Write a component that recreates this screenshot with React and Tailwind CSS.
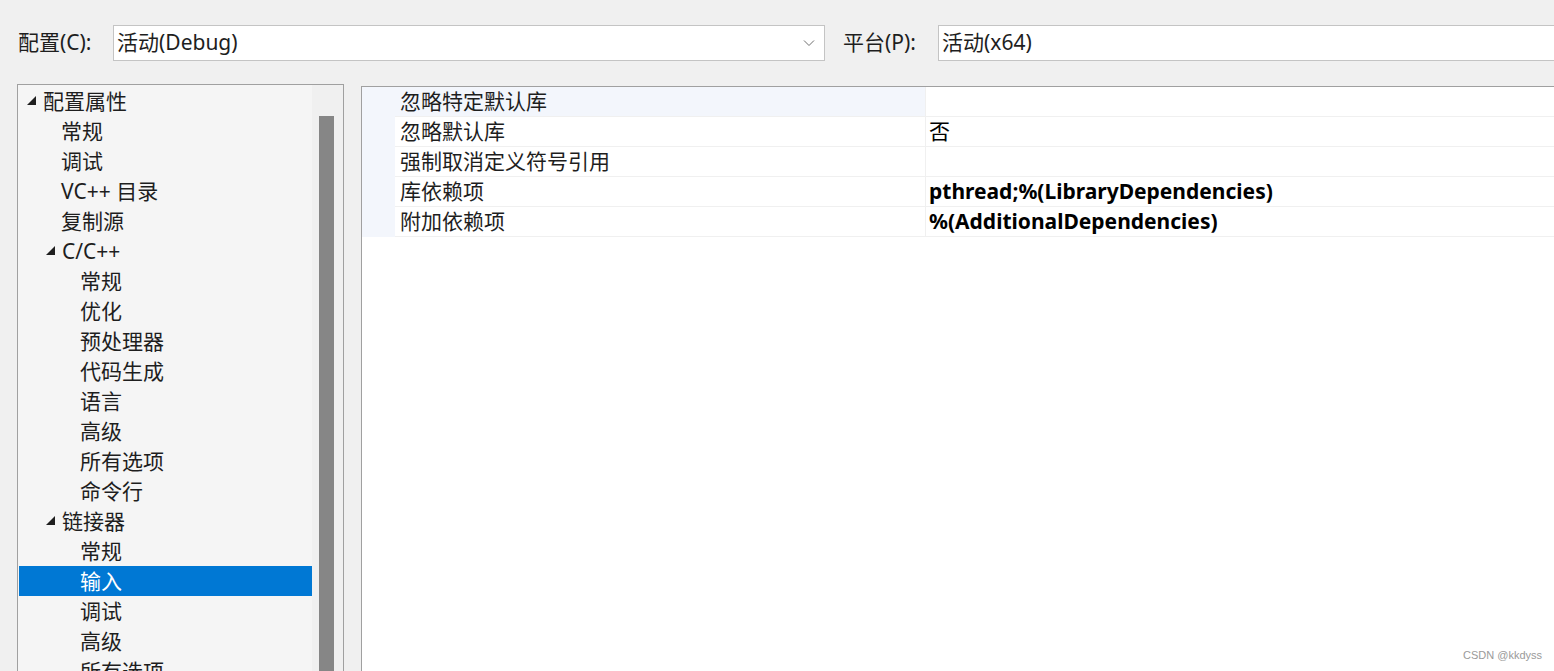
import React from "react";

const FONT = { fontFamily: '"Noto Sans", "Noto Sans CJK SC", sans-serif' };

// tree rows: level 0..2, expandable, selected
const treeRows = [
  { t: "配置属性", lv: 0, open: true },
  { t: "常规", lv: 1 },
  { t: "调试", lv: 1 },
  { t: "VC++ 目录", lv: 1 },
  { t: "复制源", lv: 1 },
  { t: "C/C++", lv: 1, open: true },
  { t: "常规", lv: 2 },
  { t: "优化", lv: 2 },
  { t: "预处理器", lv: 2 },
  { t: "代码生成", lv: 2 },
  { t: "语言", lv: 2 },
  { t: "高级", lv: 2 },
  { t: "所有选项", lv: 2 },
  { t: "命令行", lv: 2 },
  { t: "链接器", lv: 1, open: true },
  { t: "常规", lv: 2 },
  { t: "输入", lv: 2, sel: true },
  { t: "调试", lv: 2 },
  { t: "高级", lv: 2 },
  { t: "所有选项", lv: 2 },
  { t: "清单文件", lv: 2 },
];

const props = [
  { name: "忽略特定默认库", value: "", focus: true },
  { name: "忽略默认库", value: "否" },
  { name: "强制取消定义符号引用", value: "" },
  { name: "库依赖项", value: "pthread;%(LibraryDependencies)", bold: true },
  { name: "附加依赖项", value: "%(AdditionalDependencies)", bold: true },
];

function Expander() {
  return (
    <svg width="16" height="30" viewBox="0 0 16 30" className="shrink-0">
      <polygon points="9,10 9,19 0,19" fill="#1e1e1e" />
    </svg>
  );
}

function TreeRow({ row }) {
  const pad = row.open
    ? row.lv === 0
      ? "pl-[8px]"
      : "pl-[27px]"
    : row.lv === 1
    ? "pl-[42px]"
    : "pl-[61px]";
  return (
    <div
      className={`flex h-[30px] items-center ${pad} ${
        row.sel ? "bg-[#0078d4] text-white" : "text-[#1e1e1e]"
      }`}
    >
      {row.open && <Expander />}
      <span className="leading-none whitespace-nowrap">{row.t}</span>
    </div>
  );
}

function Combo({ text, wide, chevron }) {
  return (
    <div
      className={`flex h-[36px] items-center border border-[#c4c4c4] bg-white pl-[3px] ${
        wide ? "flex-1" : "w-[712px] shrink-0"
      }`}
    >
      <span className="flex-1 whitespace-nowrap text-[#1e1e1e]">{text}</span>
      {chevron && (
        <svg width="12" height="8" viewBox="0 0 12 8" className="mr-[9px]">
          <polyline points="1,1.5 6,6.5 11,1.5" fill="none" stroke="#6e6e6e" strokeWidth="1" />
        </svg>
      )}
    </div>
  );
}

export default function App() {
  return (
    <div
      className="relative h-[671px] w-[1554px] overflow-hidden bg-[#f0f0f0] text-[21px]"
      style={FONT}
    >
      {/* config / platform bar */}
      <div className="flex items-center pt-[25px] pl-[18px]">
        <span className="w-[95px] shrink-0 whitespace-nowrap text-[#1e1e1e]">配置(C):</span>
        <Combo text="活动(Debug)" chevron />
        <span className="ml-[18px] w-[95px] shrink-0 whitespace-nowrap text-[#1e1e1e]">平台(P):</span>
        <div className="-mr-[10px] flex flex-1">
          <Combo text="活动(x64)" wide />
        </div>
      </div>

      <div className="mt-[23px] flex">
        {/* property tree */}
        <div className="ml-[17px] flex h-[620px] w-[327px] shrink-0 border border-[#a0a0a0] bg-[#f5f5f5]">
          <div className="flex-1 pt-[1px] pl-[1px]">
            {treeRows.map((r, i) => (
              <TreeRow key={i} row={r} />
            ))}
          </div>
          <div className="w-[31px] bg-[#f0f0f0] pt-[31px]">
            <div className="ml-[7px] h-[600px] w-[15px] bg-[#868686]" />
          </div>
        </div>

        {/* property grid */}
        <div className="mt-[2px] ml-[17px] h-[620px] flex-1 border-t border-l border-[#a0a0a0] bg-white">
          {props.map((p, i) => (
            <div key={i} className="flex h-[30px]">
              <div className="w-[33px] shrink-0 bg-[#f3f6fc]" />
              <div
                className={`flex w-[530px] shrink-0 items-center border-b border-[#f0f0f0] pl-[5px] text-[#1e1e1e] ${
                  p.focus ? "bg-[#f3f6fc]" : ""
                }`}
              >
                <span className="whitespace-nowrap">{p.name}</span>
              </div>
              <div className="flex flex-1 items-center border-b border-l border-[#f0f0f0] pl-[3px] text-black">
                <span className={`whitespace-nowrap ${p.bold ? "font-bold" : ""}`}>{p.value}</span>
              </div>
            </div>
          ))}
        </div>
      </div>

      <div
        className="absolute right-[12px] bottom-[8px] text-[11px] text-[#9a9a9a]"
        style={{ fontFamily: '"Liberation Sans", Arial, sans-serif' }}
      >
        CSDN @kkdyss
      </div>
    </div>
  );
}
